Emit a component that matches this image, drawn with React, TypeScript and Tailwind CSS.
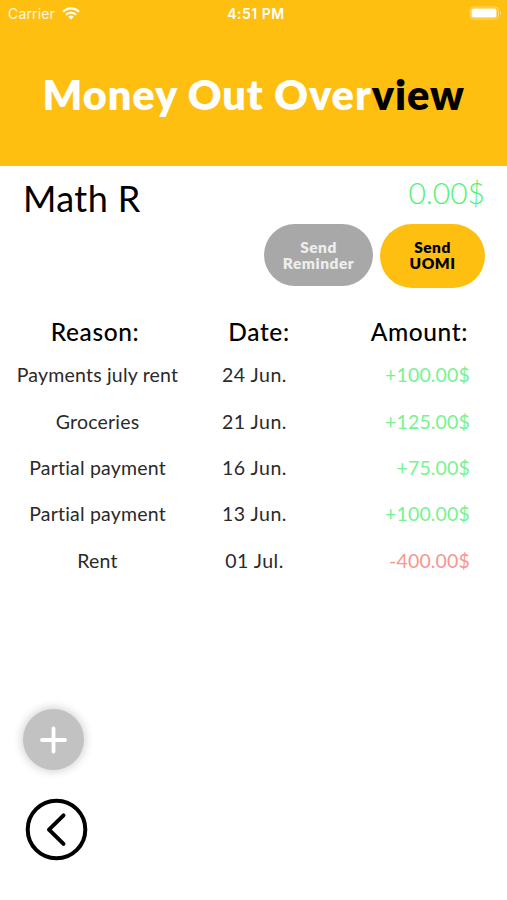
const entries = [
  { reason: "Payments july rent", date: "24 Jun.", amount: "+100.00$" },
  { reason: "Groceries", date: "21 Jun.", amount: "+125.00$" },
  { reason: "Partial payment", date: "16 Jun.", amount: "+75.00$" },
  { reason: "Partial payment", date: "13 Jun.", amount: "+100.00$" },
  { reason: "Rent", date: "01 Jul.", amount: "-400.00$" },
];

function StatusBar() {
  return (
    <div className="flex h-[26px] items-center justify-between pr-[5px] pl-2 font-['Inter',sans-serif] text-white">
      <div className="flex flex-1 items-center gap-[7px]">
        <span className="text-[14px] tracking-[0.15px] text-white/85">Carrier</span>
        <svg className="h-[13px] w-[18px]" viewBox="0 0 18 13" fill="none" stroke="currentColor" strokeWidth="2.2">
          <path d="M1.1 4.8C5.4.1 12.6.1 16.9 4.8" />
          <path d="M4 7.8c2.7-3 7.3-3 10 0" />
          <path d="M9 12.4 6.3 9.7c1.5-1.5 3.9-1.5 5.4 0z" fill="currentColor" stroke="none" />
        </svg>
      </div>
      <span className="pl-[2px] text-[14px] font-semibold tracking-[0.5px]">4:51 PM</span>
      <div className="flex flex-1 justify-end">
        <svg className="h-[14px] w-[33px]" viewBox="0 0 33 14" fill="none">
          <rect x="1" y="1" width="28.5" height="12" rx="3.5" stroke="white" strokeOpacity=".4" />
          <rect x="2.5" y="2.4" width="25" height="9.2" rx="1.8" fill="white" />
          <path d="M31 5c1.8.5 1.8 3.5 0 4z" fill="white" fillOpacity=".4" />
        </svg>
      </div>
    </div>
  );
}

export default function App() {
  return (
    <main className="flex h-[900px] w-[507px] flex-col overflow-hidden bg-white font-['Lato',sans-serif] text-black">
      {/* Header */}
      <header className="h-[165.5px] shrink-0 bg-[#ffbf11]">
        <StatusBar />
        <h1 className="mt-[40px] pl-[42.5px] text-[41.5px] leading-[56px] font-extrabold tracking-[0.95px] whitespace-nowrap text-white">
          Money Out Over<span className="text-black">view</span>
        </h1>
      </header>

      {/* Person and balance */}
      <section className="flex h-[58px] items-start justify-between pr-[22px] pl-[23px]">
        <h2 className="mt-[12px] text-[36px] leading-10 tracking-[0.4px]">Math R</h2>
        <span className="mt-[6px] text-[30px] leading-10 font-light text-[#50f272]">0.00$</span>
      </section>

      <div className="flex items-start justify-end gap-[7px] pr-[22px] text-[15.5px] leading-4 font-extrabold tracking-[0.5px]">
        <button className="h-[62.5px] w-[109px] rounded-full bg-[#a8a8a8] text-[#ededed]">
          Send
          <br />
          Reminder
        </button>
        <button className="h-[64px] w-[105px] rounded-full bg-[#ffbf11] pb-px text-black">
          Send
          <br />
          UOMI
        </button>
      </div>

      {/* Payments */}
      <section className="mt-[25.5px] h-[387.5px] [font-variant-ligatures:none]">
        <div className="grid h-[38.6px] grid-cols-[190px_138px_140px] items-center text-[24.5px] font-medium tracking-[0.6px]">
          <span className="text-center">Reason:</span>
          <span className="text-center">Date:</span>
          <span className="text-right">Amount:</span>
        </div>
        {entries.map((entry, i) => (
          <div key={i} className="grid h-[46.4px] grid-cols-[195px_119px_156px] items-center text-[19.5px] tracking-[0.2px] text-[#2a2a2a]">
            <span className="text-center">{entry.reason}</span>
            <span className="text-center tracking-[0.5px]">{entry.date}</span>
            <span className={`text-right tracking-[0.15px] ${entry.amount.startsWith("-") ? "text-[#f8968f]" : "text-[#76f38f]"}`}>
              {entry.amount}
            </span>
          </div>
        ))}
      </section>

      {/* Actions */}
      <div className="flex flex-col items-start gap-[28px] pt-[8px] pl-[23px]">
        <button className="size-[61px] rounded-full bg-[#c2c2c2] shadow-[0_0_8px_2px_rgba(0,0,0,0.16)]">
          <svg viewBox="0 0 61 61" stroke="white" strokeWidth="3.8" strokeLinecap="round">
            <path d="M30.5 19.5v23M19 31h23" />
          </svg>
        </button>
        <button className="ml-[2px] size-[63px]">
          <svg viewBox="0 0 63 63" fill="none" stroke="black" strokeWidth="4" strokeLinecap="round" strokeLinejoin="round">
            <circle cx="31.5" cy="31.5" r="28.8" />
            <path d="M38.5 17.3 24 31.6 38.5 45.9" />
          </svg>
        </button>
      </div>
    </main>
  );
}
